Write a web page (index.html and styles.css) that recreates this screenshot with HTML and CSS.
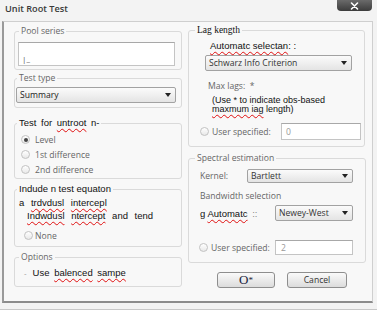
FILE: index.html
```html
<!DOCTYPE html>
<html lang="en">
<head>
    <meta charset="UTF-8">
    <title>Unit Root Test</title>
    <link rel="stylesheet" href="styles.css">
</head>
<body>
    <div class="dialog">
        <div class="titlebar">
            <span class="title">Unit Root Test</span>
            <span class="close-btn">
                <svg width="9" height="8" viewBox="0 0 9 8"><path d="M1.5 1l6 6M7.5 1l-6 6" stroke="#fff" stroke-width="1.6" stroke-linecap="round"/></svg>
            </span>
        </div>

        <div class="frame">
            <!-- left column -->
            <div class="col col-left">
                <fieldset class="group group-pool">
                    <legend class="ui">Pool series</legend>
                    <div class="edit edit-pool"><span class="caret">|_</span></div>
                </fieldset>

                <fieldset class="group group-type">
                    <legend class="ui">Test type</legend>
                    <div class="combo combo-type"><span>Summary</span><i class="arrow"></i></div>
                </fieldset>

                <fieldset class="group group-root">
                    <legend class="scan wide">Test for <span class="typo">untroot</span> n-</legend>
                    <div class="radio-row"><span class="radio checked"></span><span class="ui">Level</span></div>
                    <div class="radio-row"><span class="radio"></span><span class="ui">1st difference</span></div>
                    <div class="radio-row"><span class="radio"></span><span class="ui">2nd difference</span></div>
                </fieldset>

                <fieldset class="group group-incl">
                    <legend class="scan">Indude n test equaton</legend>
                    <div class="scan line line-a">a <span class="typo">trdvdusl</span> <span class="typo">intercepl</span></div>
                    <div class="scan line line-b"><span class="typo">Indwdusl</span> <span class="typo">ntercept</span> and tend</div>
                    <div class="radio-row row-none"><span class="radio"></span><span class="ui">None</span></div>
                </fieldset>

                <fieldset class="group group-opt">
                    <legend class="ui">Options</legend>
                    <div class="check-row"><span class="dash">-</span><span class="scan wide">Use <span class="typo">balenced</span> <span class="typo">sampe</span></span></div>
                </fieldset>
            </div>

            <!-- right column -->
            <div class="col col-right">
                <fieldset class="group group-lag">
                    <legend class="serif">Lag kength</legend>
                    <div class="scan auto-sel"><span class="typo">Automatc selectan</span>: :</div>
                    <div class="combo combo-crit"><span>Schwarz Info Criterion</span><i class="arrow"></i></div>
                    <div class="ui max-lags">Max lags:&nbsp; *</div>
                    <div class="scan note">(Use * to indicate obs-based<br><span class="typo">maxmum iag</span> length)</div>
                    <div class="radio-row user-row">
                        <span class="radio"></span><span class="ui">User specified:</span>
                        <div class="edit edit-lag"><span class="ui">0</span></div>
                    </div>
                </fieldset>

                <fieldset class="group group-spec">
                    <legend class="ui">Spectral estimation</legend>
                    <div class="field-row kernel-row">
                        <span class="ui">Kernel:</span>
                        <div class="combo combo-kernel"><span>Bartlett</span><i class="arrow"></i></div>
                    </div>
                    <div class="ui bw-label">Bandwidth selection</div>
                    <div class="field-row auto-row">
                        <span class="scan">g <span class="typo">Automatc</span> <span class="dots">::</span></span>
                        <div class="combo combo-nw"><span>Newey-West</span><i class="arrow"></i></div>
                    </div>
                    <div class="radio-row user-row spec-user">
                        <span class="radio"></span><span class="ui">User specified:</span>
                        <div class="edit edit-bw"><span class="ui">2</span></div>
                    </div>
                </fieldset>

                <div class="buttons">
                    <button class="btn btn-ok">O<sup>*</sup></button>
                    <button class="btn btn-cancel">Cancel</button>
                </div>
            </div>
        </div>
    </div>
</body>
</html>
```

FILE: styles.css
```css
* {
    margin: 0;
    padding: 0;
    box-sizing: border-box;
}

body {
    width: 377px;
    height: 310px;
    background: #f3f3f3;
    font-family: 'Open Sans', 'Liberation Sans', sans-serif;
    overflow: hidden;
}

.dialog {
    width: 377px;
    height: 310px;
    border-bottom: 1px solid #c8c8c8;
}

/* title bar */
.titlebar {
    height: 21px;
    display: flex;
    justify-content: space-between;
    align-items: flex-start;
    padding-left: 5px;
}

.title {
    margin-top: 3px;
    font-size: 9.2px;
    line-height: 12px;
    font-weight: 600;
    color: #3a3a3a;
}

.close-btn {
    width: 35px;
    height: 11px;
    margin-right: 5px;
    border-radius: 0 0 4px 4px;
    background: linear-gradient(#6a6a6a, #3c3c3c);
    display: flex;
    justify-content: center;
    align-items: center;
}

/* main frame */
.frame {
    margin-left: 2px;
    width: 371px;
    height: 282px;
    border: 1px solid #cfcfcf;
    border-left: 2px solid #9a9a9a;
    border-bottom: 2px solid #8c8c8c;
    background: #f8f8f8;
    display: grid;
    grid-template-columns: 168px 178px;
    column-gap: 6px;
    padding-left: 10px;
}

.col {
    display: flex;
    flex-direction: column;
}

/* text styles */
.ui {
    font-family: 'Open Sans', sans-serif;
    font-size: 8.6px;
    color: #666;
    white-space: nowrap;
}

.scan {
    font-family: 'Liberation Sans', Arial, sans-serif;
    font-size: 9.5px;
    color: #111;
    white-space: nowrap;
}

.scan.wide {
    word-spacing: 2px;
}

.serif {
    font-family: 'Liberation Serif', 'Times New Roman', serif;
    font-size: 9.5px;
    color: #111;
}

.typo {
    text-decoration: underline wavy #e01010;
    text-decoration-thickness: 1px;
    text-underline-offset: 2px;
}

/* group boxes */
.group {
    border: 1px solid #dadada;
    border-radius: 3px;
    min-width: 0;
}

.group legend {
    padding: 0 2px;
    line-height: 10px;
}

.group legend.scan,
.group legend.serif {
    line-height: 12px;
}

.group-pool {
    margin-top: 4px;
    padding: 6px 3px 3px;
}

.group-pool legend {
    margin-left: 1px;
}

.group-type {
    margin-top: 3px;
    padding: 4px 3px 4px;
}

.group-type legend {
    margin-left: -1px;
}

.group-root {
    margin-top: 9px;
    padding: 3px 3px 1px;
}

.group-root legend {
    margin-left: -1px;
}

.group-incl {
    margin-top: 4px;
    padding: 1px 3px 3px;
}

.group-incl legend {
    margin-left: -1px;
}

.group-opt {
    margin-top: 5px;
    padding: 4px 3px 7px;
}

.group-opt legend {
    margin-left: 1px;
}

/* controls */
.edit {
    background: #fff;
    border: 1px solid #c4c4c4;
    border-top-color: #a8a8a8;
    flex-shrink: 0;
}

.edit-pool {
    height: 24px;
    width: 157px;
    padding: 2px 3px;
}

.caret {
    font-size: 8px;
    color: #555;
    line-height: 10px;
}

.combo {
    height: 16px;
    border: 1px solid #a2a2a2;
    border-radius: 2px;
    background: linear-gradient(#fbfbfb, #e4e4e4);
    display: flex;
    justify-content: space-between;
    align-items: center;
    padding: 0 4px 0 3px;
    font-family: 'Open Sans', sans-serif;
    font-size: 8.6px;
    color: #333;
    white-space: nowrap;
    flex-shrink: 0;
}

.arrow {
    width: 0;
    height: 0;
    border-left: 3px solid transparent;
    border-right: 3px solid transparent;
    border-top: 4px solid #222;
}

.combo-type {
    width: 160px;
    margin-left: -2px;
    color: #1a1a1a;
}

.radio-row {
    height: 15px;
    display: flex;
    align-items: center;
    gap: 5px;
    margin-left: 3px;
}

.radio {
    width: 9px;
    height: 9px;
    border-radius: 50%;
    border: 1px solid #c2c2c2;
    background: linear-gradient(#fff, #e8e8e8);
    display: flex;
    justify-content: center;
    align-items: center;
    flex-shrink: 0;
}

.radio.checked::before {
    content: '';
    width: 4px;
    height: 4px;
    border-radius: 50%;
    background: #444;
}

.line {
    height: 13px;
    line-height: 13px;
    word-spacing: 4px;
}

.line-a {
    margin-left: 1px;
}

.line-b {
    margin-left: 9px;
}

.row-none {
    margin-top: 6px;
    margin-left: 6px;
    gap: 2px;
}

.check-row {
    height: 13px;
    display: flex;
    align-items: center;
    margin-left: 6px;
    gap: 6px;
}

.dash {
    font-size: 8px;
    color: #999;
}

/* right column */
.group-lag {
    margin-top: 2px;
    margin-right: 1px;
    padding: 4px 3px 6px 12px;
}

.group-lag legend {
    margin-left: -6px;
}

.auto-sel {
    margin-left: 9px;
    line-height: 12px;
}

.combo-crit {
    margin-top: 3px;
    margin-left: 4px;
    width: 147px;
}

.max-lags {
    margin-top: 10px;
    margin-left: 7px;
    line-height: 10px;
}

.note {
    margin-top: 5px;
    margin-left: 11px;
    font-size: 9px;
    line-height: 9px;
}

.user-row {
    height: 17px;
    margin-top: 9px;
    margin-left: -1px;
    gap: 3px;
}

.edit-lag {
    margin-left: auto;
    width: 80px;
    height: 17px;
    padding: 0 4px;
    display: flex;
    align-items: center;
}

.group-spec {
    margin-top: 6px;
    padding: 6px 12px 7px 12px;
}

.group-spec legend {
    margin-left: -6px;
}

.field-row {
    display: flex;
    align-items: center;
    margin-left: -1px;
}

.kernel-row {
    height: 14px;
}

.combo-kernel {
    margin-left: auto;
    width: 106px;
    height: 14px;
}

.bw-label {
    margin-top: 8px;
    margin-left: -1px;
    line-height: 10px;
}

.auto-row {
    margin-top: 4px;
    height: 16px;
}

.dots {
    color: #888;
    margin-left: 2px;
}

.combo-nw {
    margin-left: auto;
    width: 78px;
}

.spec-user {
    height: 15px;
    margin-top: 19px;
    margin-left: -2px;
    gap: 3px;
}

.edit-bw {
    margin-left: auto;
    width: 78px;
    height: 15px;
    padding: 0 5px;
    display: flex;
    align-items: center;
}

.edit-bw .ui,
.edit-lag .ui {
    color: #999;
}

.buttons {
    margin-top: 9px;
    padding-left: 29px;
    display: flex;
    gap: 12px;
}

.btn {
    height: 16px;
    border: 1px solid #8e8e8e;
    border-radius: 3px;
    background: linear-gradient(#fafafa, #dcdcdc);
    display: flex;
    justify-content: center;
    align-items: center;
}

.btn-ok {
    width: 58px;
    font-family: 'Liberation Serif', 'Times New Roman', serif;
    font-size: 13px;
    font-weight: 400;
    line-height: 14px;
    color: #1b2440;
}

.btn-ok sup {
    font-size: 9px;
    line-height: 0;
    vertical-align: 4px;
}

.btn-cancel {
    width: 60px;
    font-family: 'Open Sans', sans-serif;
    font-size: 8.6px;
    color: #333;
}
```
